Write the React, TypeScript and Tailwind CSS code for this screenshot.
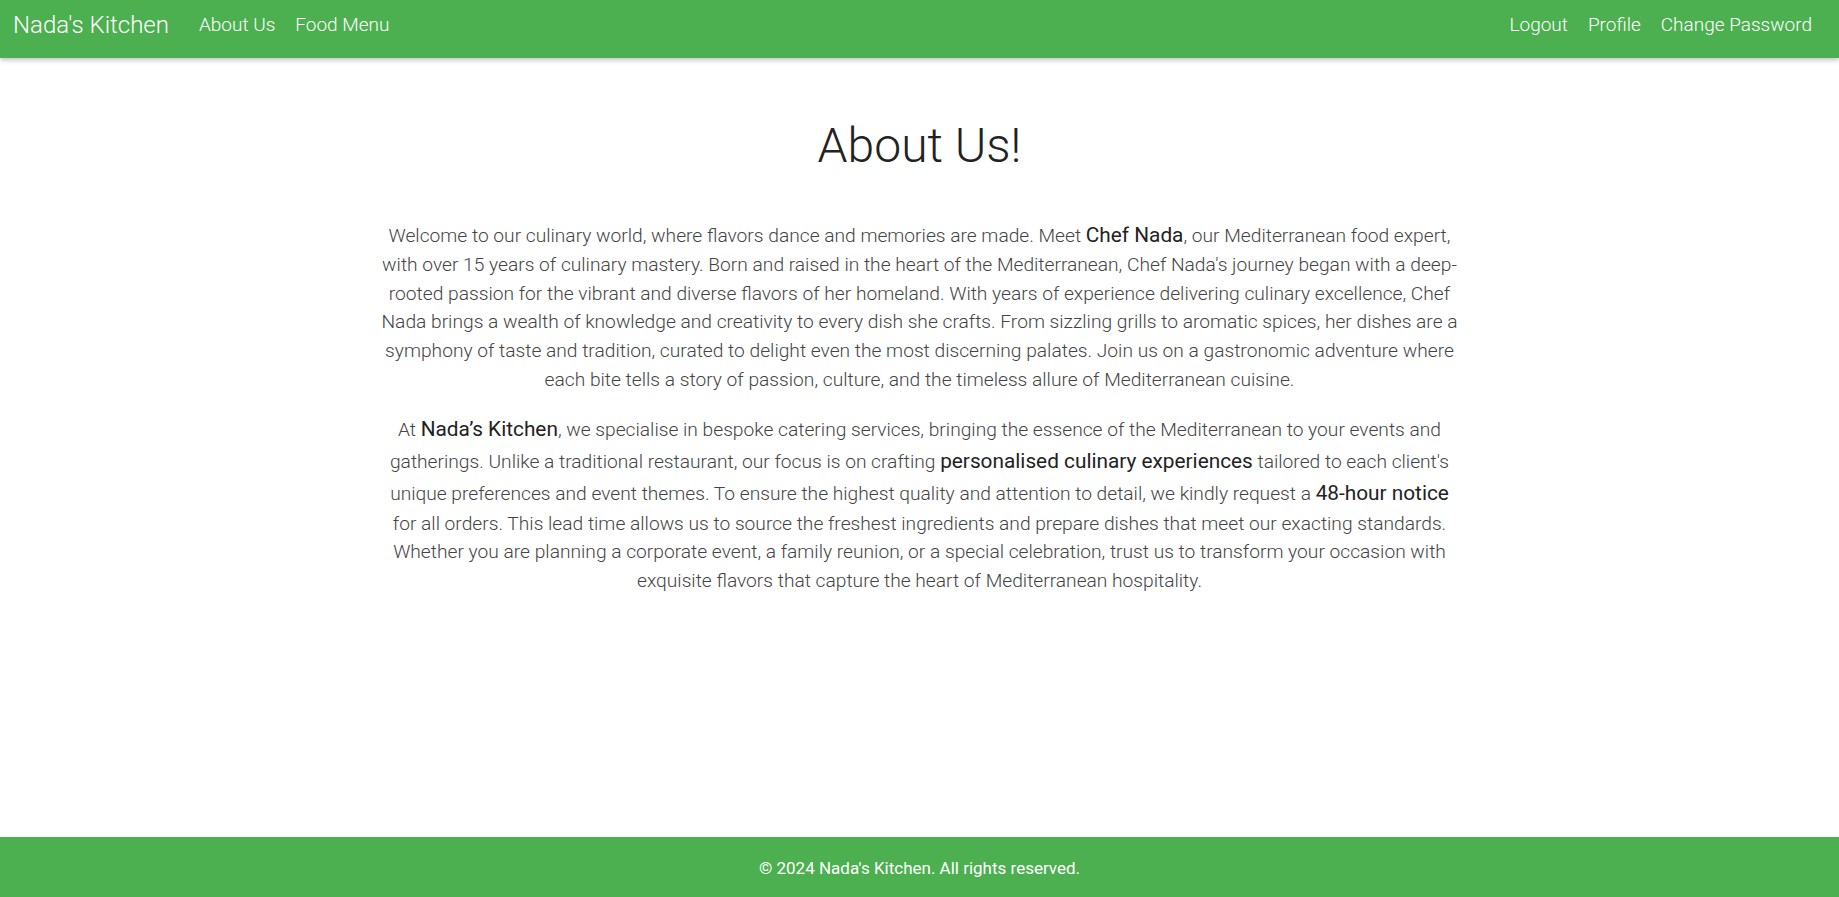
const navLeft = ["About Us", "Food Menu"];
const navRight = ["Logout", "Profile", "Change Password"];

const Strong = ({ children }: { children: React.ReactNode }) => (
  <span className="text-[20.8px] leading-[1.55] font-normal text-[#222]">{children}</span>
);

export default function App() {
  return (
    <div
      className="min-h-screen flex flex-col bg-white"
      style={{ fontFamily: "Roboto, 'Noto Sans', sans-serif" }}
    >
      <nav className="relative z-10 h-[58px] bg-[#4caf50] shadow-[0_2px_5px_rgba(0,0,0,0.25)]">
        <div className="h-[50px] flex items-center justify-between pl-[13px] pr-[17px]">
          <div className="flex items-center">
            <a className="text-[24px] font-light text-white leading-[1.5] mr-[20px]">Nada's Kitchen</a>
            {navLeft.map((item) => (
              <a key={item} className="px-[10px] text-[19px] font-light text-white leading-[1.5]">
                {item}
              </a>
            ))}
          </div>
          <div className="flex items-center">
            {navRight.map((item) => (
              <a key={item} className="px-[10px] text-[19px] font-light text-white leading-[1.5]">
                {item}
              </a>
            ))}
          </div>
        </div>
      </nav>

      <main className="flex-1">
        <div className="w-[1080px] mx-auto text-center">
          <h1 className="mt-[59px] mb-[44px] text-[48px] font-light leading-[1.2] text-[#222]">About Us!</h1>
          <p className="mb-[18px] text-[19.2px] font-light leading-[28.8px] text-[#444]">
            Welcome to our culinary world, where flavors dance and memories are made. Meet <Strong>Chef Nada</Strong>, our
            Mediterranean food expert, with over 15 years of culinary mastery. Born and raised in the heart of the
            Mediterranean, Chef Nada's journey began with a deep-rooted passion for the vibrant and diverse flavors of her
            homeland. With years of experience delivering culinary excellence, Chef Nada brings a wealth of knowledge and
            creativity to every dish she crafts. From sizzling grills to aromatic spices, her dishes are a symphony of taste
            and tradition, curated to delight even the most discerning palates. Join us on a gastronomic adventure where
            each bite tells a story of passion, culture, and the timeless allure of Mediterranean cuisine.
          </p>
          <p className="text-[19.2px] font-light leading-[28.8px] text-[#444]">
            At <Strong>Nada’s Kitchen</Strong>, we specialise in bespoke catering services, bringing the essence of the
            Mediterranean to your events and gatherings. Unlike a traditional restaurant, our focus is on crafting{" "}
            <Strong>personalised culinary experiences</Strong> tailored to each client's unique preferences and event
            themes. To ensure the highest quality and attention to detail, we kindly request a{" "}
            <Strong>48-hour notice</Strong> for all orders. This lead time allows us to source the freshest ingredients and
            prepare dishes that meet our exacting standards. Whether you are planning a corporate event, a family reunion,
            or a special celebration, trust us to transform your occasion with exquisite flavors that capture the heart of
            Mediterranean hospitality.
          </p>
        </div>
      </main>

      <footer className="h-[60px] pt-[4px] bg-[#4caf50] flex items-center justify-center">
        <p className="text-[17px] text-white">© 2024 Nada's Kitchen. All rights reserved.</p>
      </footer>
    </div>
  );
}
